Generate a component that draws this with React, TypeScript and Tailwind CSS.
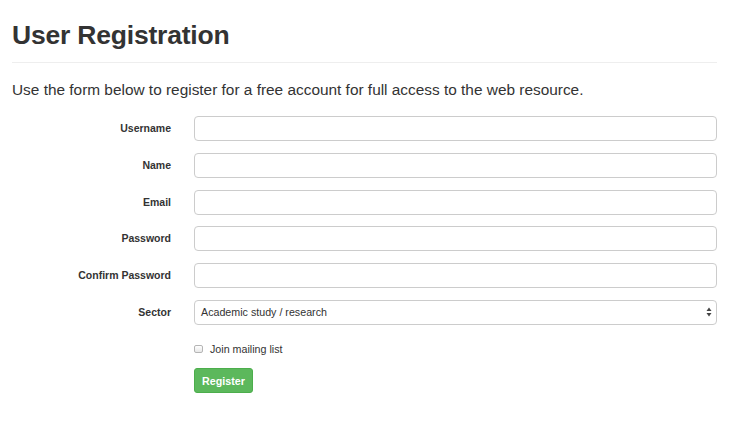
import React from "react";

const fields = ["Username", "Name", "Email", "Password", "Confirm Password"];

export default function App() {
  return (
    <div className="w-[740px] h-[421px] bg-white px-[12px] text-[#333]" style={{ fontFamily: '"Liberation Sans", Arial, sans-serif' }}>
      <h1 className="pt-[19px] text-[26.5px] leading-[32px] font-bold text-[#333] tracking-[-0.2px]">User Registration</h1>
      <div className="mt-[11px] mr-[11px] h-px bg-[#eeeeee]" />
      <p className="mt-[17px] text-[15.4px] leading-[20px]">Use the form below to register for a free account for full access to the web resource.</p>
      <div className="mt-[16px] flex flex-col gap-[11.8px] mr-[11px]">
        {fields.map((f) => (
          <div key={f} className="flex items-center">
            <label className="w-[159px] text-right text-[10.5px] font-bold leading-[25px]">{f}</label>
            <input
              type={f.includes("Password") ? "password" : "text"}
              className="ml-[23px] flex-1 h-[25px] rounded-[4px] border border-[#cccccc] bg-white px-[6px] text-[11px] outline-none"
            />
          </div>
        ))}
        <div className="flex items-center">
          <label className="w-[159px] text-right text-[10.5px] font-bold leading-[25px]">Sector</label>
          <div className="ml-[23px] flex-1 h-[25px] rounded-[4px] border border-[#cccccc] bg-white pl-[6px] pr-[4px] flex items-center justify-between text-[10.7px]">
            <span>Academic study / research</span>
            <svg width="6" height="10" viewBox="0 0 6 10">
              <path d="M3 0.5 L5.5 4 L0.5 4 Z" fill="#444" />
              <path d="M3 9.5 L5.5 6 L0.5 6 Z" fill="#444" />
            </svg>
          </div>
        </div>
      </div>
      <div className="ml-[182px] mt-[16px] flex items-center gap-[7px] text-[10.7px]">
        <span className="w-[9px] h-[8px] rounded-[2px] border border-[#b5b5b5] bg-gradient-to-b from-white to-[#e8e8e8]" />
        <span>Join mailing list</span>
      </div>
      <button className="ml-[182px] mt-[11px] h-[25px] w-[59px] rounded-[3px] border border-[#4cae4c] bg-[#5cb85c] text-white text-[10.7px] font-bold">Register</button>
    </div>
  );
}
